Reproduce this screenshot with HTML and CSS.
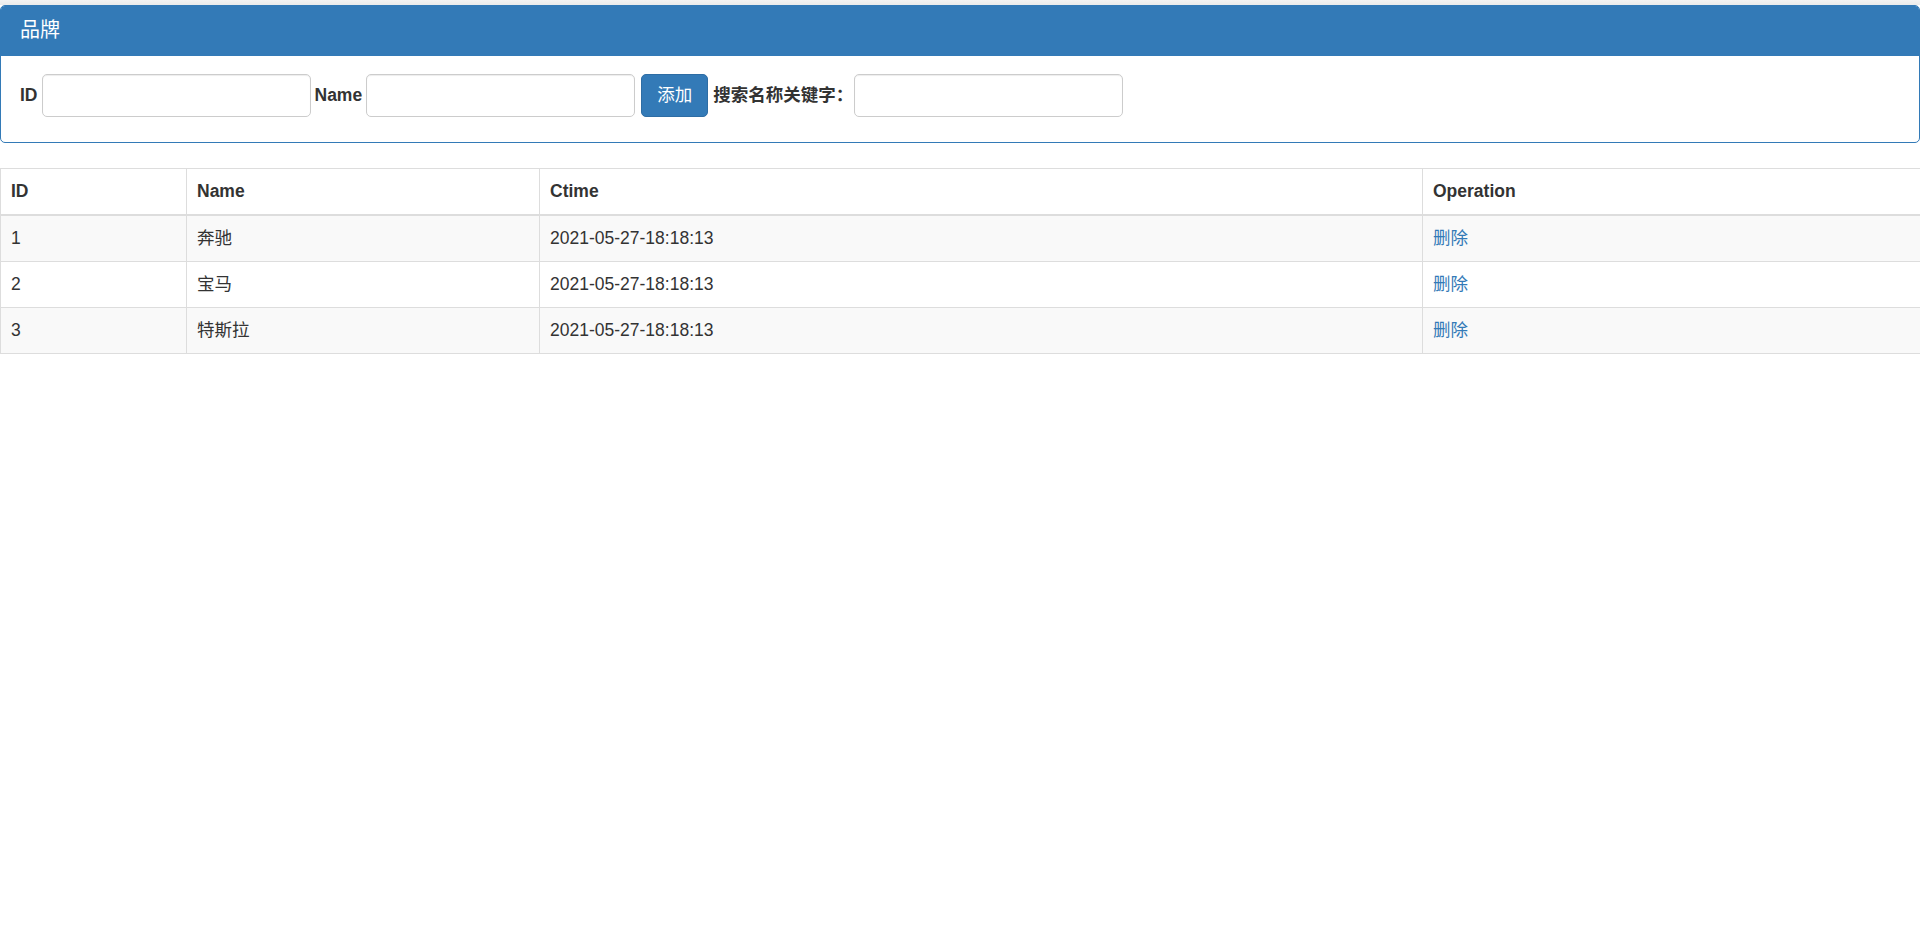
FILE: index.html
```html
<!DOCTYPE html>
<html lang="zh-CN">
<head>
<meta charset="utf-8">
<title>品牌</title>
<link rel="stylesheet" href="styles.css">
</head>
<body>
<div class="topbar"></div>
<div class="panel">
  <div class="panel-heading">品牌</div>
  <div class="panel-body">
    <label class="lbl">ID</label>
    <input class="field" type="text">
    <label class="lbl">Name</label>
    <input class="field" type="text">
    <button class="btn" type="button">添加</button>
    <label class="lbl lbl-search">搜索名称关键字：</label>
    <input class="field" type="text">
  </div>
</div>
<table class="grid">
  <colgroup>
    <col class="c-id">
    <col class="c-name">
    <col class="c-time">
    <col class="c-op">
  </colgroup>
  <thead>
    <tr><th>ID</th><th>Name</th><th>Ctime</th><th>Operation</th></tr>
  </thead>
  <tbody>
    <tr><td>1</td><td>奔驰</td><td>2021-05-27-18:18:13</td><td><a class="link" href="#">删除</a></td></tr>
    <tr><td>2</td><td>宝马</td><td>2021-05-27-18:18:13</td><td><a class="link" href="#">删除</a></td></tr>
    <tr><td>3</td><td>特斯拉</td><td>2021-05-27-18:18:13</td><td><a class="link" href="#">删除</a></td></tr>
  </tbody>
</table>
</body>
</html>
```

FILE: styles.css
```css
html, body {
  margin: 0;
  padding: 0;
  background: #fff;
}
body {
  font-family: "Liberation Sans", Arial, "Noto Sans CJK SC", sans-serif;
  font-size: 17.5px;
  line-height: 25px;
  color: #333;
}
.topbar {
  height: 5px;
  background: linear-gradient(#f3f3f3, #ebebeb);
}
.panel {
  border: 1px solid #337ab7;
  border-radius: 5px;
  margin-bottom: 25px;
  background: #fff;
}
.panel-heading {
  background: #337ab7;
  color: #fff;
  font-size: 20px;
  line-height: 25px;
  padding: 12px 19px 13px;
  border-radius: 4px 4px 0 0;
}
.panel-body {
  display: flex;
  align-items: center;
  gap: 4px;
  padding: 18px 19px 25px;
}
.lbl {
  font-weight: bold;
  color: #333;
  white-space: nowrap;
}
.lbl-search {
  margin-right: -3px;
}
.field {
  box-sizing: border-box;
  width: 269px;
  height: 43px;
  margin: 0;
  padding: 7px 15px;
  border: 1px solid #ccc;
  border-radius: 5px;
  box-shadow: inset 0 1px 1px rgba(0, 0, 0, 0.075);
  font-family: inherit;
  font-size: 17.5px;
  color: #555;
  background: #fff;
}
.btn {
  box-sizing: border-box;
  height: 43px;
  margin: 0 1px 0 2px;
  padding: 0 15px;
  border: 1px solid #2e6da4;
  border-radius: 5px;
  background: #337ab7;
  color: #fff;
  font-family: inherit;
  font-size: 17.5px;
  line-height: 25px;
}
.grid {
  width: 100%;
  table-layout: fixed;
  border-collapse: collapse;
  border: 1px solid #ddd;
}
.c-id { width: 186px; }
.c-name { width: 353px; }
.c-time { width: 883px; }
.c-op { width: 498px; }
.grid th,
.grid td {
  border: 1px solid #ddd;
  padding: 10px;
  text-align: left;
  vertical-align: top;
  line-height: 25px;
}
.grid th {
  font-weight: bold;
  border-bottom: 2px solid #ddd;
}
.grid tbody tr:nth-child(odd) {
  background: #f9f9f9;
}
.link {
  color: #337ab7;
  text-decoration: none;
}
```
